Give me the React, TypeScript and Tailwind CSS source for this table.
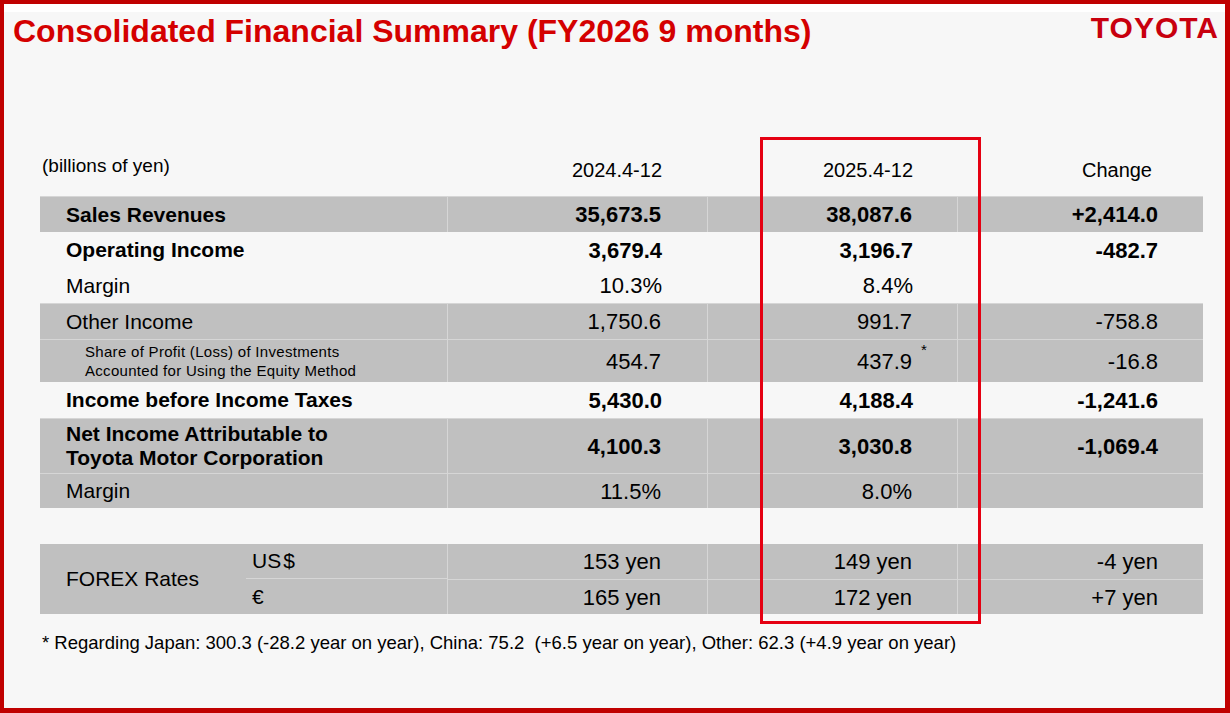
import React from "react";

type Row = {
  label: React.ReactNode;
  a: string;
  b: string;
  c: string;
  h: string;
  bold?: boolean;
  gray?: boolean;
  small?: boolean;
  star?: boolean;
};

const rows: Row[] = [
  { label: "Sales Revenues", a: "35,673.5", b: "38,087.6", c: "+2,414.0", h: "h-[36px]", bold: true, gray: true },
  { label: "Operating Income", a: "3,679.4", b: "3,196.7", c: "-482.7", h: "h-[36px]", bold: true },
  { label: "Margin", a: "10.3%", b: "8.4%", c: "", h: "h-[35px]" },
  { label: "Other Income", a: "1,750.6", b: "991.7", c: "-758.8", h: "h-[36px]", gray: true },
  {
    label: (
      <span className="block text-[15px] leading-[19px] tracking-[0.02em]">
        Share of Profit (Loss) of Investments
        <br />
        Accounted for Using the Equity Method
      </span>
    ),
    a: "454.7",
    b: "437.9",
    c: "-16.8",
    h: "h-[43px]",
    gray: true,
    small: true,
    star: true,
  },
  { label: "Income before Income Taxes", a: "5,430.0", b: "4,188.4", c: "-1,241.6", h: "h-[36px]", bold: true },
  {
    label: (
      <span className="block leading-[24px]">
        Net Income Attributable to
        <br />
        Toyota Motor Corporation
      </span>
    ),
    a: "4,100.3",
    b: "3,030.8",
    c: "-1,069.4",
    h: "h-[55px]",
    bold: true,
    gray: true,
  },
  { label: "Margin", a: "11.5%", b: "8.0%", c: "", h: "h-[35px]", gray: true },
];

function TableRow({ r }: { r: Row }) {
  const line = r.gray ? "border-r border-[#d6d6d6]" : "";
  const weight = r.bold ? "font-bold" : "font-normal";
  return (
    <div
      className={`grid grid-cols-[408px_260px_250px_245px] ${r.h} ${
        r.gray ? "bg-[#c0c0c0] border-t border-[#d6d6d6]" : ""
      }`}
    >
      <div className={`flex items-center ${r.small ? "pl-[45px]" : "pl-[26px]"} text-[21px] ${weight} ${line}`}>
        {r.label}
      </div>
      <div className={`flex items-center justify-end pr-[46px] text-[22px] ${weight} ${line}`}>{r.a}</div>
      <div className={`flex items-center justify-end pr-[45px] text-[22px] ${weight} ${line}`}>
        <span className="relative">
          {r.b}
          {r.star && <span className="absolute left-full top-[-6px] ml-[9px] text-[15px] font-normal">*</span>}
        </span>
      </div>
      <div className={`flex items-center justify-end pr-[45px] text-[22px] ${weight}`}>{r.c}</div>
    </div>
  );
}

export default function App() {
  return (
    <div className="relative w-[1230px] h-[713px] overflow-hidden bg-[#f7f7f7] border-[#c00000] border-l-4 border-t-4 border-r-[5px] border-b-[5px] font-['Liberation_Sans',Arial,sans-serif] text-black">
      <div className="h-[8px] bg-white" />
      <div className="flex justify-between items-start h-[36px] pl-[9px] pr-[6px]">
        <h1 className="mt-[3px] text-[32px] leading-none font-bold text-[#d40000]">
          Consolidated Financial Summary (FY2026 9 months)
        </h1>
        <div className="mt-[1px] text-[30px] leading-none font-bold tracking-[1px] text-[#c8000e]">TOYOTA</div>
      </div>

      <div className="ml-[36px] mt-[108px] w-[1163px]">
        <div className="grid grid-cols-[408px_260px_250px_245px] h-[40px]">
          <div className="pl-[2px] text-[19px] leading-[20px]">(billions of yen)</div>
          <div className="mt-[4px] pr-[46px] text-right text-[20px] leading-[20px]">2024.4-12</div>
          <div className="mt-[4px] pr-[45px] text-right text-[20px] leading-[20px]">2025.4-12</div>
          <div className="mt-[4px] pr-[51px] text-right text-[20px] leading-[20px]">Change</div>
        </div>

        {rows.map((r, i) => (
          <TableRow key={i} r={r} />
        ))}

        <div className="mt-[36px] grid grid-cols-[408px_260px_250px_245px] grid-rows-[35px_35px] bg-[#c0c0c0] text-[22px]">
          <div className="row-span-2 flex border-r border-[#d6d6d6]">
            <div className="w-[206px] flex items-center pl-[26px] text-[21px]">FOREX Rates</div>
            <div className="flex-1 flex flex-col text-[21px]">
              <div className="h-[35px] flex items-center pl-[6px] border-b border-[#d6d6d6]">
                US<span className="ml-[2px]">$</span>
              </div>
              <div className="flex-1 flex items-center pl-[6px]">€</div>
            </div>
          </div>
          <div className="flex items-center justify-end pr-[46px] border-r border-[#d6d6d6]">153 yen</div>
          <div className="flex items-center justify-end pr-[45px] border-r border-[#d6d6d6]">149 yen</div>
          <div className="flex items-center justify-end pr-[45px]">-4 yen</div>
          <div className="flex items-center justify-end pr-[46px] border-r border-t border-[#d6d6d6]">165 yen</div>
          <div className="flex items-center justify-end pr-[45px] border-r border-t border-[#d6d6d6]">172 yen</div>
          <div className="flex items-center justify-end pr-[45px] border-t border-[#d6d6d6]">+7 yen</div>
        </div>

        <p className="mt-[19px] pl-[2px] text-[18.5px] leading-[20px] whitespace-pre">
          * Regarding Japan: 300.3 (-28.2 year on year), China: 75.2  (+6.5 year on year), Other: 62.3 (+4.9 year on year)
        </p>
      </div>

      <div className="absolute left-[756px] top-[133px] w-[221px] h-[487px] border-[3px] border-[#e50012]" />
    </div>
  );
}
